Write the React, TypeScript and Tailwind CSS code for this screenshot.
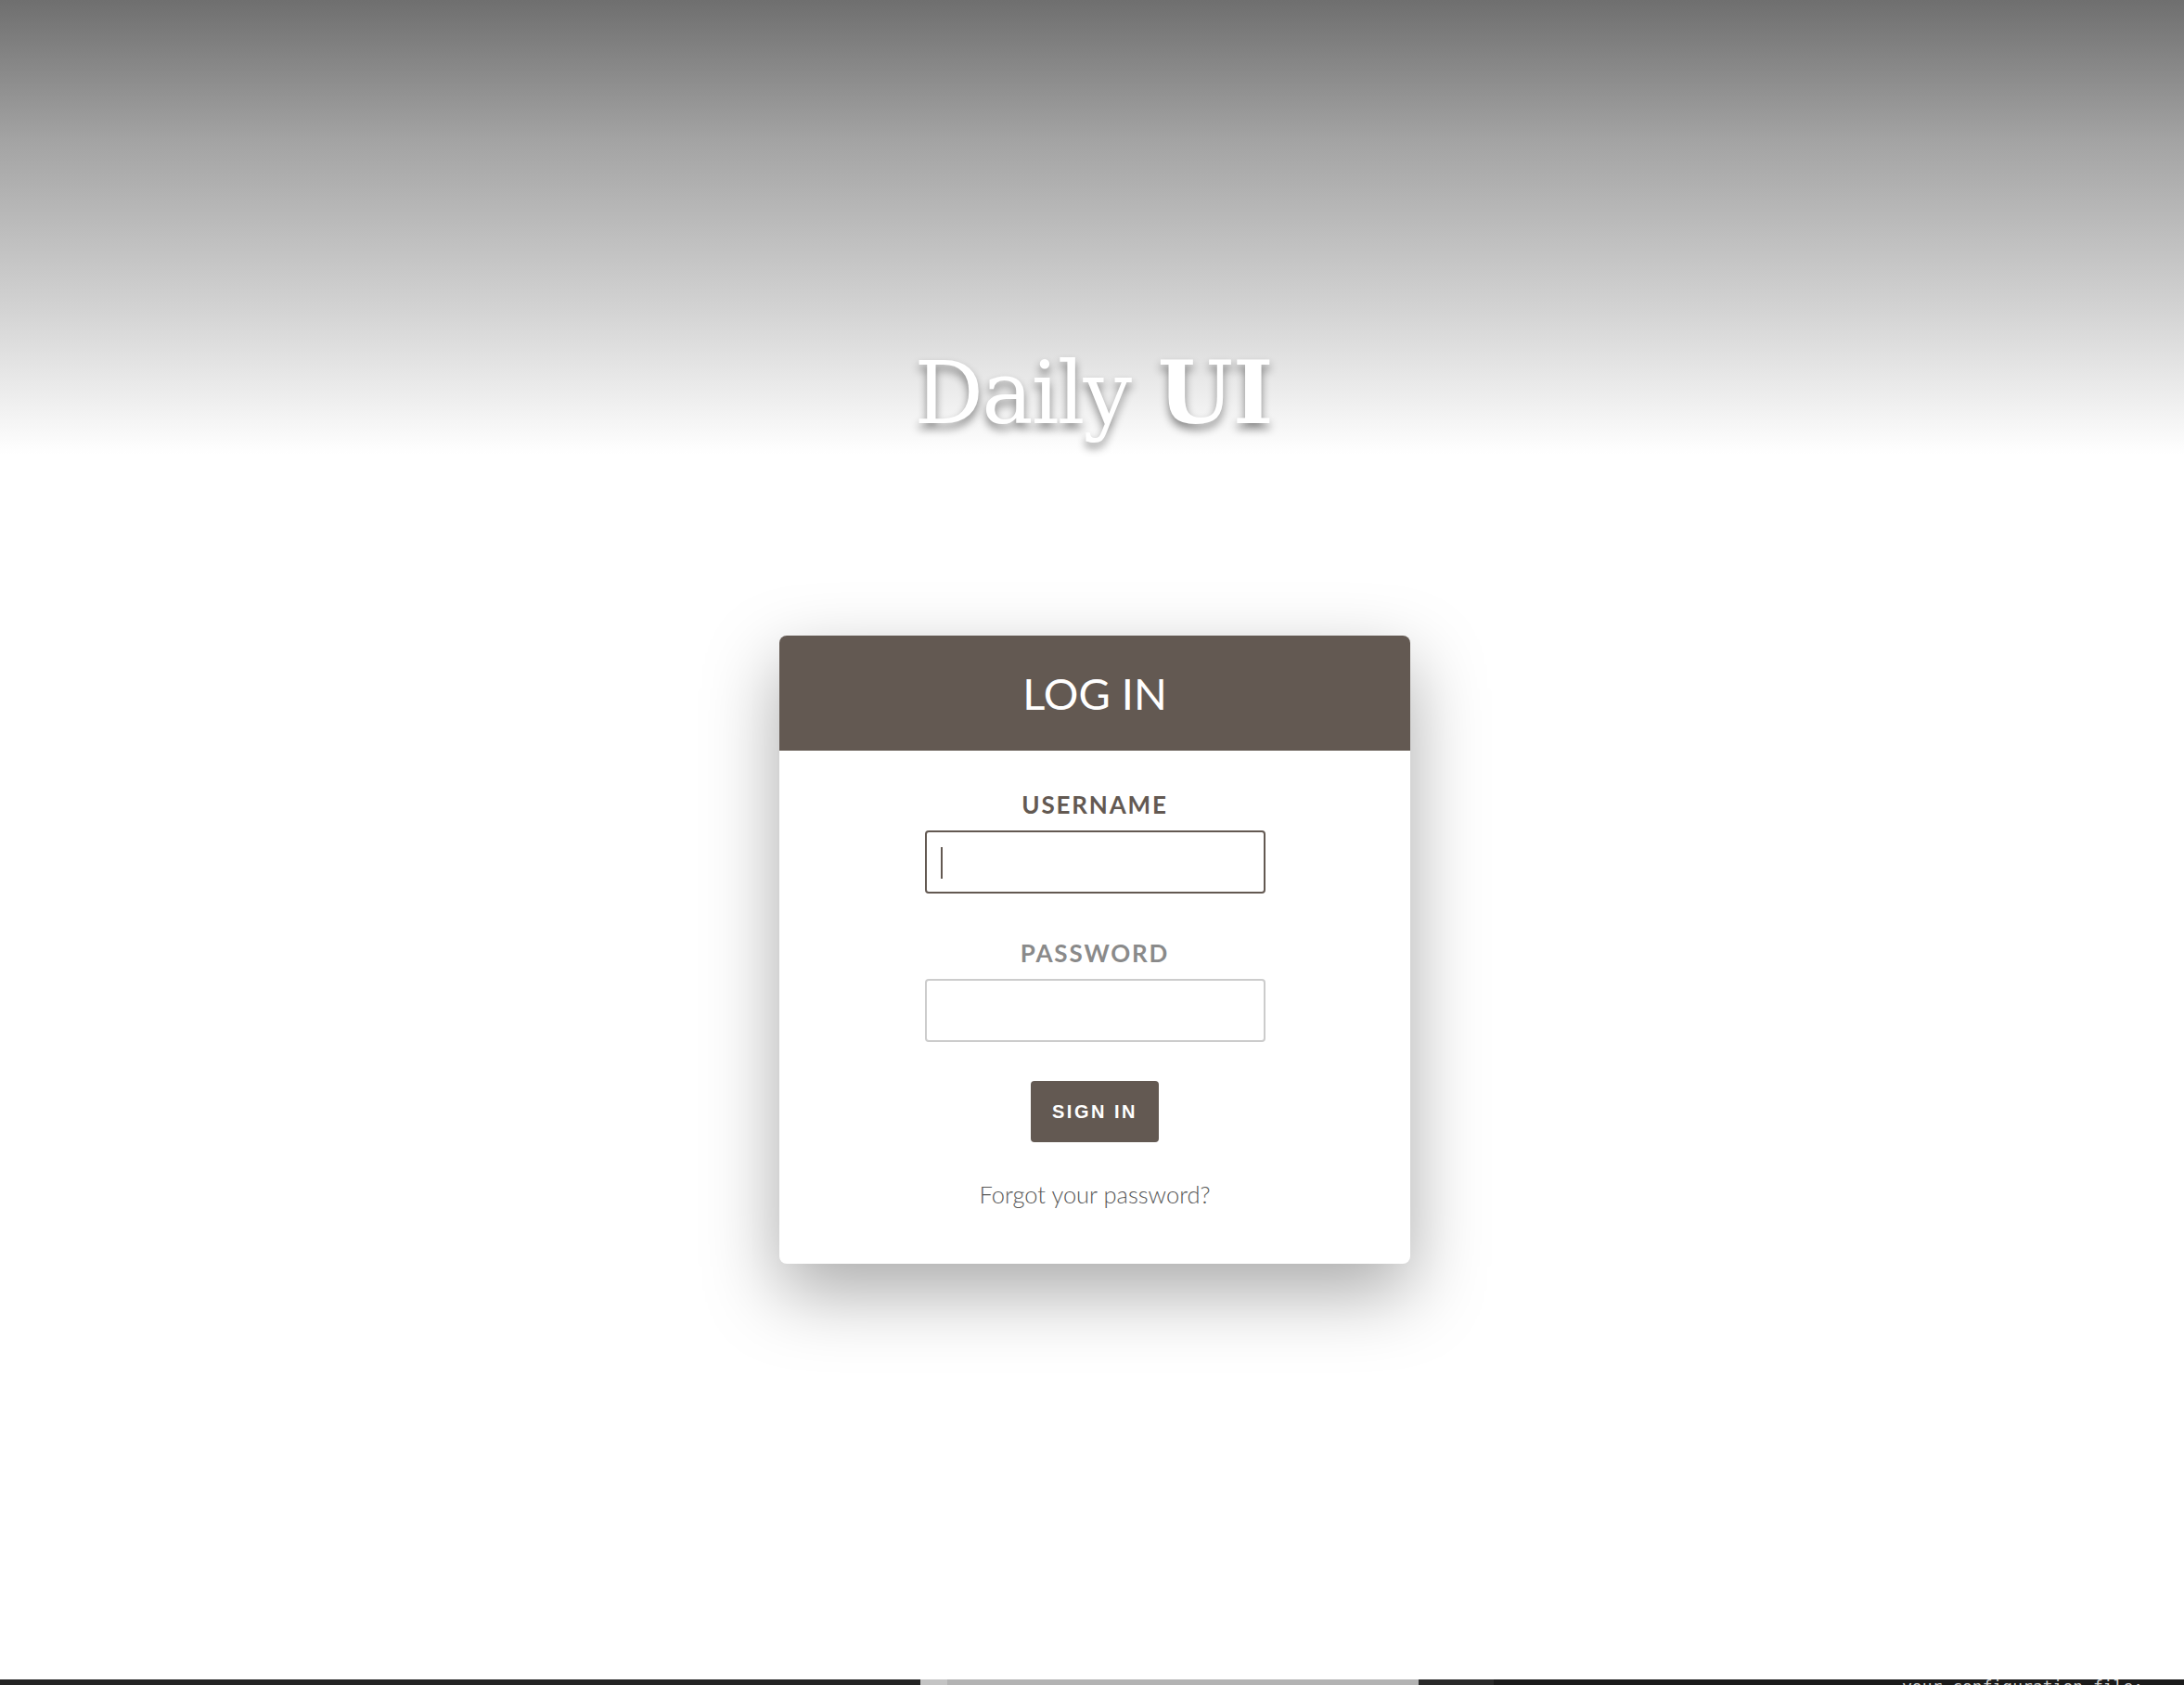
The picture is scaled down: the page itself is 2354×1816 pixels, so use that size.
import React from "react";

const brown = "#635952";

function Field({
  label,
  type,
  active,
}: {
  label: string;
  type: string;
  active?: boolean;
}) {
  return (
    <div className="flex flex-col items-center">
      <label
        className={`text-[26px] font-bold leading-[30px] tracking-[0.07em] ${
          active ? "text-[#635952]" : "text-[#8a8a8a]"
        }`}
      >
        {label}
      </label>
      <div className="relative mt-[13px]">
        <input
          type={type}
          className={`block h-[68px] w-[367px] rounded-[4px] border-2 bg-white px-4 outline-none ${
            active ? "border-[#635952]" : "border-[#cccccc]"
          }`}
        />
        {active && (
          <span className="pointer-events-none absolute left-[17px] top-[18px] h-[34px] w-[2px] bg-[#635952]" />
        )}
      </div>
    </div>
  );
}

export default function App() {
  return (
    <div
      className="flex h-screen flex-col bg-white"
      style={{ fontFamily: "Lato, 'Noto Sans', sans-serif" }}
    >
      <main className="flex flex-1 flex-col items-center bg-[linear-gradient(to_bottom,#6f6f6f_0px,#a3a3a3_150px,#d2d2d2_330px,#ffffff_490px)] bg-no-repeat">
        <h1
          className="ml-[4px] pt-[377px] text-[93px] leading-none text-white [text-shadow:0_6px_10px_rgba(0,0,0,0.45)]"
          style={{ fontFamily: "'DejaVu Serif', serif" }}
        >
          <span className="font-normal tracking-[-0.02em]">Daily</span>{" "}
          <span className="font-bold">UI</span>
        </h1>

        <div className="ml-[6px] mt-[214px] w-[680px] overflow-hidden rounded-lg bg-white shadow-[0_30px_80px_rgba(0,0,0,0.34)]">
          <div
            className="flex h-[124px] items-center justify-center text-[47px] text-white"
            style={{ backgroundColor: brown }}
          >
            LOG IN
          </div>
          <div className="flex flex-col items-center pb-[60px] pt-[43px]">
            <Field label="USERNAME" type="text" active />
            <div className="mt-[49px]">
              <Field label="PASSWORD" type="password" />
            </div>
            <button
              className="mt-[42px] h-[66px] w-[138px] rounded-[4px] bg-[#635952] text-[20px] font-bold tracking-[2.5px] text-white"
              style={{ fontFamily: "'Liberation Sans', Arial, sans-serif" }}
            >
              SIGN IN
            </button>
            <a
              href="#"
              className="mt-[42px] text-[25.5px] font-light leading-[29px] text-[#595959]"
            >
              Forgot your password?
            </a>
          </div>
        </div>
      </main>

      <div className="flex h-[6px] overflow-hidden">
        <div className="w-[992px] bg-[#232323]" />
        <div className="w-[29px] bg-[#c4c4c4]" />
        <div className="w-[508px] bg-[#b3b3b3]" />
        <div className="w-[81px] bg-[#2a2a2a]" />
        <div className="relative flex-1 bg-[#1b1b1b]">
          <span
            className="absolute left-[440px] top-[-1px] whitespace-nowrap text-[18px] leading-none text-[#cfcfcf]"
            style={{ fontFamily: "'DejaVu Sans Mono', monospace" }}
          >
            your configuration file:
          </span>
        </div>
      </div>
    </div>
  );
}
